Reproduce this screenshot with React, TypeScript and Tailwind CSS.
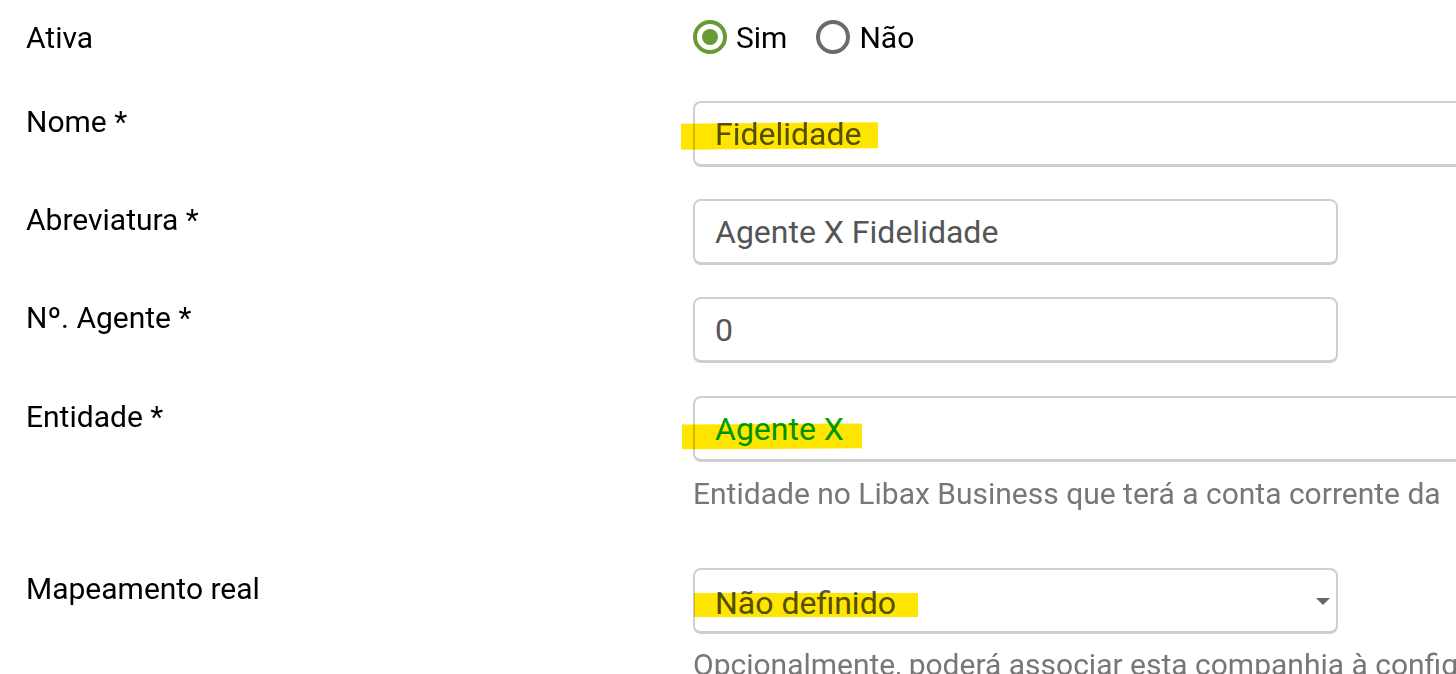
import React from "react";

const font = { fontFamily: "Roboto, 'Noto Sans', Arial, sans-serif" };

function Label({ children }: { children: React.ReactNode }) {
  return <div className="w-[667px] shrink-0 text-[30px] leading-[42px] text-black">{children}</div>;
}

function Marker({ className }: { className: string }) {
  return <span className={"pointer-events-none absolute bg-[#ffe600] mix-blend-multiply " + className} />;
}

function Field({ value, wide, green, marker }: { value: string; wide?: boolean; green?: boolean; marker?: string }) {
  return (
    <div className={"relative shrink-0 h-[66px] rounded-[8px] border-2 border-[#cfcfcf] border-b-[3px] bg-white pl-[20px] flex items-center " + (wide ? "w-[1000px]" : "w-[645px]")}>
      <span className={"text-[32px] " + (green ? "text-[#00a300]" : "text-[#555555]")}>{value}</span>
      {marker && <Marker className={marker} />}
    </div>
  );
}

export default function App() {
  return (
    <div className="w-[1456px] h-[674px] overflow-hidden bg-white pl-[26px] pt-[17px]" style={font}>
      <div className="flex">
        <Label>Ativa</Label>
        <div className="flex items-center h-[42px] -mt-[1px] text-[30px] text-black">
          <span className="w-[34px] h-[34px] rounded-full border-[4px] border-[#6a9a34] flex items-center justify-center">
            <span className="w-[16px] h-[16px] rounded-full bg-[#6a9a34]" />
          </span>
          <span className="ml-[9px]">Sim</span>
          <span className="ml-[29px] w-[34px] h-[34px] rounded-full border-[4px] border-[#6b6b6b]" />
          <span className="ml-[9px]">Não</span>
        </div>
      </div>

      <div className="flex mt-[42px]">
        <Label>Nome *</Label>
        <Field value="Fidelidade" wide marker="left-[-14px] top-[20px] w-[197px] h-[26px] -rotate-[0.4deg]" />
      </div>

      <div className="flex mt-[32px]">
        <Label>Abreviatura *</Label>
        <Field value="Agente X Fidelidade" />
      </div>

      <div className="flex mt-[32px]">
        <Label>Nº. Agente *</Label>
        <Field value="0" />
      </div>

      <div className="flex mt-[33px]">
        <Label>Entidade *</Label>
        <div className="shrink-0">
          <Field value="Agente X" wide green marker="left-[-13px] top-[26px] w-[180px] h-[25px] -rotate-[0.3deg]" />
          <p className="mt-[11px] text-[30px] leading-[42px] text-[#777777] whitespace-nowrap">
            Entidade no Libax Business que terá a conta corrente da
          </p>
        </div>
      </div>

      <div className="flex mt-[53px]">
        <Label>Mapeamento real</Label>
        <div className="shrink-0">
          <div className="relative w-[645px] h-[66px] rounded-[8px] border-2 border-[#cfcfcf] border-b-[3px] bg-white pl-[20px] flex items-center">
            <span className="text-[32px] text-[#555555] mt-[4px]">Não definido</span>
            <svg className="absolute right-[6px] top-[28px]" width="14" height="8" viewBox="0 0 14 8">
              <path d="M0 0h14L7 7z" fill="#666666" />
            </svg>
            <Marker className="left-[-1px] top-[23px] w-[224px] h-[24px]" />
          </div>
          <p className="mt-[10px] text-[30px] leading-[42px] text-[#777777] whitespace-nowrap">
            Opcionalmente, poderá associar esta companhia à configuração de outra companhia
          </p>
        </div>
      </div>
    </div>
  );
}
